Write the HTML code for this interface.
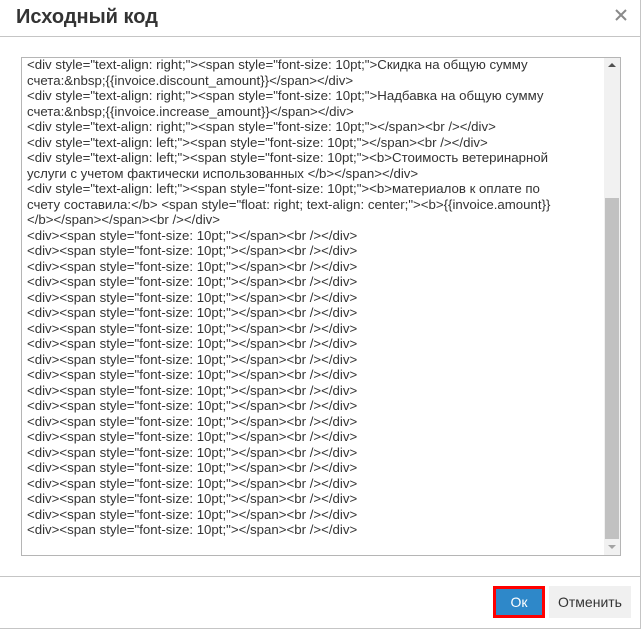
<!DOCTYPE html>
<html><head><meta charset="utf-8"><style>
body{margin:0;width:642px;height:629px;background:#fff;font-family:"Liberation Sans",Arial,sans-serif;position:relative;overflow:hidden}
.dlg{position:absolute;left:0;top:0;width:640px;height:628px;border-right:1px solid #c5c5c5;border-bottom:1px solid #c5c5c5}
.hd{position:absolute;left:0;top:0;width:641px;height:36px;border-bottom:1px solid #c5c5c5}
.hd h1{margin:0;position:absolute;left:16px;top:6px;font-size:20px;font-weight:bold;color:#333}
.x{position:absolute;left:614px;top:8px;}
.ta{position:absolute;left:21px;top:57px;width:598px;height:497px;border:1px solid #b5b5b5;overflow:hidden}
.txt{position:absolute;left:5px;top:-1px;font-size:13.25px;line-height:15.5px;color:#333;white-space:pre}
.sb{position:absolute;left:582px;top:0;width:16px;height:497px;background:#f1f1f1}
.th{position:absolute;left:1px;top:140px;width:14px;height:341px;background:#c1c1c1}
.ft{position:absolute;left:0;top:576px;width:641px;border-top:1px solid #c5c5c5}
.ok{position:absolute;left:493px;top:586px;width:46px;height:26px;border:3px solid #f00;background:#2e88c9;color:#fff;font-size:14px;text-align:center;line-height:26px}
.cn{position:absolute;left:549px;top:586px;width:82px;height:32px;background:#f0f0f0;color:#333;font-size:14px;text-align:center;line-height:32px}
</style></head><body>
<div class="dlg"></div>
<div class="hd"><h1>Исходный код</h1><svg class="x" width="14" height="14" viewBox="0 0 14 14"><path d="M2 2L12 12M12 2L2 12" stroke="#8a8a8a" stroke-width="2"/></svg></div>
<div class="ta"><div class="txt">&lt;div style="text-align: right;"&gt;&lt;span style="font-size: 10pt;"&gt;Скидка на общую сумму
счета:&amp;nbsp;{{invoice.discount_amount}}&lt;/span&gt;&lt;/div&gt;
&lt;div style="text-align: right;"&gt;&lt;span style="font-size: 10pt;"&gt;Надбавка на общую сумму
счета:&amp;nbsp;{{invoice.increase_amount}}&lt;/span&gt;&lt;/div&gt;
&lt;div style="text-align: right;"&gt;&lt;span style="font-size: 10pt;"&gt;&lt;/span&gt;&lt;br /&gt;&lt;/div&gt;
&lt;div style="text-align: left;"&gt;&lt;span style="font-size: 10pt;"&gt;&lt;/span&gt;&lt;br /&gt;&lt;/div&gt;
&lt;div style="text-align: left;"&gt;&lt;span style="font-size: 10pt;"&gt;&lt;b&gt;Стоимость ветеринарной
услуги с учетом фактически использованных &lt;/b&gt;&lt;/span&gt;&lt;/div&gt;
&lt;div style="text-align: left;"&gt;&lt;span style="font-size: 10pt;"&gt;&lt;b&gt;материалов к оплате по
счету составила:&lt;/b&gt; &lt;span style="float: right; text-align: center;"&gt;&lt;b&gt;{{invoice.amount}}
&lt;/b&gt;&lt;/span&gt;&lt;/span&gt;&lt;br /&gt;&lt;/div&gt;
&lt;div&gt;&lt;span style="font-size: 10pt;"&gt;&lt;/span&gt;&lt;br /&gt;&lt;/div&gt;
&lt;div&gt;&lt;span style="font-size: 10pt;"&gt;&lt;/span&gt;&lt;br /&gt;&lt;/div&gt;
&lt;div&gt;&lt;span style="font-size: 10pt;"&gt;&lt;/span&gt;&lt;br /&gt;&lt;/div&gt;
&lt;div&gt;&lt;span style="font-size: 10pt;"&gt;&lt;/span&gt;&lt;br /&gt;&lt;/div&gt;
&lt;div&gt;&lt;span style="font-size: 10pt;"&gt;&lt;/span&gt;&lt;br /&gt;&lt;/div&gt;
&lt;div&gt;&lt;span style="font-size: 10pt;"&gt;&lt;/span&gt;&lt;br /&gt;&lt;/div&gt;
&lt;div&gt;&lt;span style="font-size: 10pt;"&gt;&lt;/span&gt;&lt;br /&gt;&lt;/div&gt;
&lt;div&gt;&lt;span style="font-size: 10pt;"&gt;&lt;/span&gt;&lt;br /&gt;&lt;/div&gt;
&lt;div&gt;&lt;span style="font-size: 10pt;"&gt;&lt;/span&gt;&lt;br /&gt;&lt;/div&gt;
&lt;div&gt;&lt;span style="font-size: 10pt;"&gt;&lt;/span&gt;&lt;br /&gt;&lt;/div&gt;
&lt;div&gt;&lt;span style="font-size: 10pt;"&gt;&lt;/span&gt;&lt;br /&gt;&lt;/div&gt;
&lt;div&gt;&lt;span style="font-size: 10pt;"&gt;&lt;/span&gt;&lt;br /&gt;&lt;/div&gt;
&lt;div&gt;&lt;span style="font-size: 10pt;"&gt;&lt;/span&gt;&lt;br /&gt;&lt;/div&gt;
&lt;div&gt;&lt;span style="font-size: 10pt;"&gt;&lt;/span&gt;&lt;br /&gt;&lt;/div&gt;
&lt;div&gt;&lt;span style="font-size: 10pt;"&gt;&lt;/span&gt;&lt;br /&gt;&lt;/div&gt;
&lt;div&gt;&lt;span style="font-size: 10pt;"&gt;&lt;/span&gt;&lt;br /&gt;&lt;/div&gt;
&lt;div&gt;&lt;span style="font-size: 10pt;"&gt;&lt;/span&gt;&lt;br /&gt;&lt;/div&gt;
&lt;div&gt;&lt;span style="font-size: 10pt;"&gt;&lt;/span&gt;&lt;br /&gt;&lt;/div&gt;
&lt;div&gt;&lt;span style="font-size: 10pt;"&gt;&lt;/span&gt;&lt;br /&gt;&lt;/div&gt;
&lt;div&gt;&lt;span style="font-size: 10pt;"&gt;&lt;/span&gt;&lt;br /&gt;&lt;/div&gt;</div>
<div class="sb"><div style="position:absolute;left:4px;top:5px;border-left:4px solid transparent;border-right:4px solid transparent;border-bottom:4px solid #505050"></div><div class="th"></div><div style="position:absolute;left:4px;top:487px;border-left:4px solid transparent;border-right:4px solid transparent;border-top:4px solid #a3a3a3"></div></div></div>
<div class="ft"></div>
<div class="ok">Ок</div>
<div class="cn">Отменить</div>
</body></html>
